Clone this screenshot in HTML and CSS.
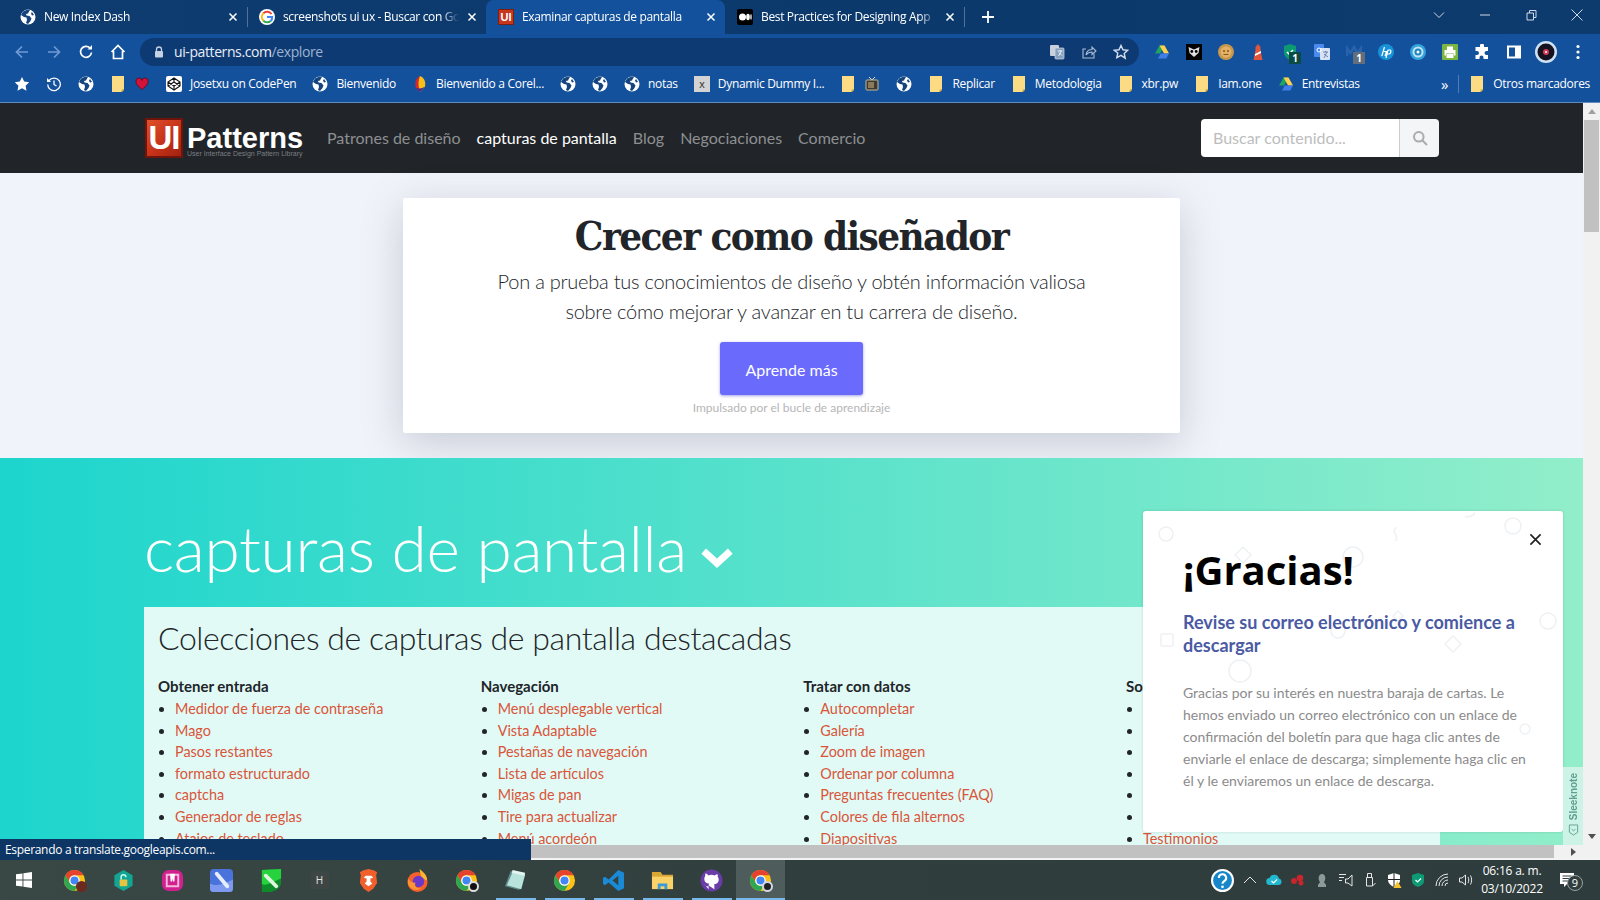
FILE: index.html
```html
<!DOCTYPE html>
<html lang="es">
<head>
<meta charset="utf-8">
<title>Examinar capturas de pantalla</title>
<link rel="stylesheet" href="styles.css">
</head>
<body>
<svg class="sprite" xmlns="http://www.w3.org/2000/svg">
  <symbol id="globe" viewBox="0 0 16 16"><circle cx="8" cy="8" r="7.500" fill="#fff"/><path d="M7 .8 3 2.600 1 6l3 2 2.500.5.5 2.500-1 3 2 1 2.500-3 1-2.500-2-2.500-3-.5-.5-1.500 2-.5 1-2 1-1.500z" fill="#14457f"/><path d="M12 3l2 3-2 .5-1-2z" fill="#14457f"/></symbol>
  <symbol id="folder" viewBox="0 0 16 16"><path d="M2 0h12v13l-3 3H2z" fill="#fbdc85"/><path d="M14 13v1l-2 2h-1l1-3z" fill="#d9b552"/></symbol>
  <symbol id="chrome" viewBox="0 0 24 24"><circle cx="12" cy="12" r="11" fill="#fbc116"/><path d="M12 1A11 11 0 0 0 2.500 6.500l4.500 8A5.500 5.500 0 0 1 12 6.500h9.500A11 11 0 0 0 12 1z" fill="#e5432f"/><path d="M2.500 6.500A11 11 0 0 0 12 23l4.800-8.300a5.500 5.500 0 0 1-9.600 0z" fill="#2fa750"/><circle cx="12" cy="12" r="5.500" fill="#fff"/><circle cx="12" cy="12" r="4.200" fill="#4285f4"/></symbol>
  <symbol id="drive" viewBox="0 0 16 16"><path d="M5.500 1.500h5L6 9.500H1z" fill="#1fa463"/><path d="M5.500 1.500h5l4.500 8h-5z" fill="#ffd04b"/><path d="M4 14.500l2.700-5H15l-2.700 5z" fill="#3f7ee8"/></symbol>
</svg>

<div class="shell">
  <header class="tabstrip">
    <div class="tab">
      <svg class="ic"><use href="#globe"/></svg>
      <span class="tab-title">New Index Dash</span>
      <svg class="tab-x" viewBox="0 0 10 10"><path d="M1.500 1.500l7 7m0-7l-7 7"/></svg>
    </div>
    <div class="tab tab-sep">
      <svg class="ic" viewBox="0 0 16 16"><circle cx="8" cy="8" r="8" fill="#fff"/><path d="M12.500 5A5.200 5.200 0 0 0 4.300 4.400" fill="none" stroke="#ea4335" stroke-width="2"/><path d="M4.300 4.400a5.200 5.200 0 0 0 0 7.200" fill="none" stroke="#fbbc04" stroke-width="2"/><path d="M4.300 11.600a5.200 5.200 0 0 0 7.400 .4" fill="none" stroke="#34a853" stroke-width="2"/><path d="M8 8h5.200a5.200 5.200 0 0 1-1.500 4" fill="none" stroke="#4285f4" stroke-width="2"/></svg>
      <span class="tab-title">screenshots ui ux - Buscar con Google</span>
      <svg class="tab-x" viewBox="0 0 10 10"><path d="M1.500 1.500l7 7m0-7l-7 7"/></svg>
    </div>
    <div class="tab tab-active">
      <span class="ui-fav">UI</span>
      <span class="tab-title">Examinar capturas de pantalla</span>
      <svg class="tab-x" viewBox="0 0 10 10"><path d="M1.500 1.500l7 7m0-7l-7 7"/></svg>
    </div>
    <div class="tab">
      <svg class="ic" viewBox="0 0 16 16"><rect width="16" height="16" rx="2" fill="#000"/><circle cx="5.500" cy="8" r="3.500" fill="#fff"/><ellipse cx="11" cy="8" rx="1.800" ry="3.300" fill="#fff"/><ellipse cx="14" cy="8" rx=".7" ry="3" fill="#fff"/></svg>
      <span class="tab-title">Best Practices for Designing App</span>
      <svg class="tab-x" viewBox="0 0 10 10"><path d="M1.500 1.500l7 7m0-7l-7 7"/></svg>
    </div>
    <span class="strip-sep"></span>
    <svg class="new-tab" viewBox="0 0 14 14"><path d="M7 1v12M1 7h12"/></svg>
    <div class="win-controls">
      <svg class="win" viewBox="0 0 12 12"><path d="M1 3.500l5 5 5-5"/></svg>
      <svg class="win" viewBox="0 0 12 12"><path d="M1 6h10"/></svg>
      <svg class="win" viewBox="0 0 12 12"><path d="M2 4h6.500v7H2zM4.500 4V1.500H11v7H8.500"/></svg>
      <svg class="win" viewBox="0 0 12 12"><path d="M.5.500l11 11m0-11l-11 11"/></svg>
    </div>
  </header>

  <nav class="toolbar">
    <div class="nav-btns">
      <svg class="tool dim" viewBox="0 0 16 16"><path d="M14 8H2.500M8 2.500 2.500 8 8 13.500"/></svg>
      <svg class="tool dim" viewBox="0 0 16 16"><path d="M2 8h11.500M8 2.500 13.500 8 8 13.500"/></svg>
      <svg class="tool" viewBox="0 0 16 16"><path d="M13.500 8.500A5.500 5.500 0 1 1 12 4"/><path class="solid" d="M9.500 5.500H14V1z"/></svg>
      <svg class="tool" viewBox="0 0 16 16"><path d="M1.500 8 8 1.500 14.500 8M3.500 7v7.500h9V7"/></svg>
    </div>
    <div class="omnibox">
      <svg class="lock" viewBox="0 0 12 12"><path d="M3.500 5V3.500a2.500 2.500 0 0 1 5 0V5"/><rect class="solid" x="2" y="5" width="8" height="6.500" rx="1"/></svg>
      <span class="url">ui-patterns.com<span class="url-path">/explore</span></span>
      <div class="omni-actions">
        <svg class="omni-ic" viewBox="0 0 16 16"><rect x="1" y="1" width="9" height="11" rx="1" fill="#c7d0db" stroke="none"/><rect x="6" y="4" width="9" height="11" rx="1" fill="#86a0bf" stroke="#d6dde6" stroke-width=".7"/><path d="M8.500 7h5M11 6v1M9.500 12l3-5M10 8.500l3 3" stroke="#fff" stroke-width=".8"/></svg>
        <svg class="omni-ic" viewBox="0 0 16 16"><path d="M13 9.500V14H2V5h3"/><path d="M5 11c.5-3.500 3-5.500 6-5.500V3l4 4-4 3.500V8c-2.500 0-4.500 1-6 3z"/></svg>
        <svg class="omni-ic star" viewBox="0 0 16 16"><path d="M8 1.500l2 4.300 4.700.5-3.500 3.200 1 4.700L8 11.300l-4.200 2.400 1-4.700L1.300 6.300 6 5.800z"/></svg>
      </div>
    </div>
    <div class="extensions">
      <svg class="ic"><use href="#drive"/></svg>
      <svg class="ic" viewBox="0 0 16 16"><rect width="16" height="16" fill="#000"/><path d="M2.500 3 8 5.500 13.500 3 12.500 9 8 13 3.500 9z" fill="#ddd"/><circle cx="5.800" cy="7.500" r="1.400"/><circle cx="10.200" cy="7.500" r="1.400"/></svg>
      <svg class="ic" viewBox="0 0 16 16"><circle cx="8" cy="8" r="8" fill="#c9974a"/><circle cx="8" cy="8" r="5.500" fill="#e3b064"/><circle cx="6" cy="7" r="1" fill="#7b5a25"/><circle cx="10" cy="7" r="1" fill="#7b5a25"/><path d="M5.500 10.500h5" stroke="#7b5a25"/></svg>
      <svg class="ic" viewBox="0 0 16 16"><path d="M8 0l2.500 3v3L12.500 16h-9L5.500 6V3z" fill="#e0563b"/><path d="M5 10 11 7v2l-6 3z" fill="#fff"/></svg>
      <span class="ext-badged">
        <svg class="ic" viewBox="0 0 16 16"><path d="M8 0l6 2v6c0 4-3 6.500-6 8-3-1.500-6-4-6-8V2z" fill="#0b9a71"/><path d="M5 8l2 2 4-4" fill="none" stroke="#fff" stroke-width="1.500"/></svg>
        <span class="badge badge-green">1</span>
      </span>
      <svg class="ic" viewBox="0 0 16 16"><rect width="10" height="13" rx="1" fill="#4a8af0"/><rect x="6" y="4" width="10" height="12" rx="1" fill="#d5e2f7"/><circle cx="5" cy="6" r="2" fill="none" stroke="#fff"/><path d="M9 8h5M11.500 7v1M10 14l3-6M10 10l4 3" stroke="#5a6f8f" stroke-width=".8"/></svg>
      <span class="ext-badged">
        <svg class="ic" viewBox="0 0 16 16"><path d="M1 12V4l3.500 5L8 3l3.500 6L15 4v8" fill="none" stroke="#2a62ab" stroke-width="2.500"/></svg>
        <span class="badge badge-gray">1</span>
      </span>
      <svg class="ic" viewBox="0 0 16 16"><circle cx="8" cy="8" r="8" fill="#1792d8"/><path d="M6.500 3 3.800 12M6 7.500h2.500L7 12M10 6 8 14M10 6h2c1 0 1 1 .7 2.500-.3 1-1 1.500-2 1.500H9" fill="none" stroke="#fff" stroke-width="1.200"/></svg>
      <svg class="ic" viewBox="0 0 16 16"><circle cx="8" cy="8" r="8" fill="#33a3dc"/><circle cx="8" cy="8" r="5.500" fill="#bfe4f5"/><circle cx="8" cy="8" r="3.500" fill="#1f86bd"/><circle cx="8" cy="8" r="1.500" fill="#fff"/></svg>
      <svg class="ic" viewBox="0 0 16 16"><rect width="16" height="16" rx="1" fill="#7cb542"/><path d="M5 2.500h6V6H5zM2.500 6h11v5.500H12V9.500H4v2H2.500zM4.500 10h7v4h-7z" fill="#fff"/></svg>
      <svg class="ic" viewBox="0 0 16 16"><path d="M6 1.500a2 2 0 0 1 4 0V3h4v4h-1.500a2 2 0 0 0 0 4H14v4H9.500v-1.500a2 2 0 0 0-4 0V15H1.500v-4H3a2 2 0 0 0 0-4H1.500V3H6z" fill="#fff"/></svg>
      <svg class="ic" viewBox="0 0 16 16"><path d="M1 1.500h14v13H1z" fill="#fff"/><path d="M3 3.500h6v9H3z" fill="#14519c"/></svg>
      <svg class="avatar" viewBox="0 0 22 22"><circle cx="11" cy="11" r="11" fill="#cfe2f5"/><circle cx="11" cy="11" r="8.500" fill="#161320"/><circle cx="11" cy="11" r="3" fill="#d63a55"/><circle cx="11" cy="11" r="1" fill="#fff"/></svg>
      <svg class="ic" viewBox="0 0 16 16"><circle cx="8" cy="2.500" r="1.600" fill="#fff"/><circle cx="8" cy="8" r="1.600" fill="#fff"/><circle cx="8" cy="13.500" r="1.600" fill="#fff"/></svg>
    </div>
  </nav>

  <div class="bookmarks">
    <svg class="ic" viewBox="0 0 16 16"><path d="M8 1l2.200 4.500 5 .7-3.600 3.500.9 5L8 12.300l-4.500 2.400.9-5L.8 6.200l5-.7z" fill="#fff"/></svg>
    <svg class="ic hist" viewBox="0 0 16 16"><path d="M3 4.500A6.300 6.300 0 1 1 1.700 8.500M8 4.500V8.500l2.500 1.500"/><path class="solid" d="M1 2v4h4z"/></svg>
    <svg class="ic"><use href="#globe"/></svg>
    <svg class="ic"><use href="#folder"/></svg>
    <svg class="ic heart" viewBox="-2 -2 20 20"><path d="M8 15C3 11 .5 8 .5 5A3.800 3.800 0 0 1 8 3.500 3.800 3.800 0 0 1 15.500 5c0 3-2.500 6-7.500 10z" fill="#d4123a" stroke="#5a0a18"/></svg>
    <a class="bm"><svg class="ic" viewBox="0 0 16 16"><rect width="16" height="16" rx="2" fill="#fff"/><path d="M8 2l6 4v4l-6 4-6-4V6zM2 6l6 4 6-4M2 10l6-4 6 4M8 2v4M8 10v4" fill="none" stroke="#111" stroke-width="1.100"/></svg>Josetxu on CodePen</a>
    <a class="bm"><svg class="ic"><use href="#globe"/></svg>Bienvenido</a>
    <a class="bm"><svg class="ic" viewBox="0 0 16 16"><path d="M8 0C3.500 2 2.500 8 4 12l4 4z" fill="#d7272c"/><path d="M8 0c4 1.500 6 5.500 5 10.500L8 16C6 10 6 5 8 0z" fill="#f6c21a"/><path d="M4 12l4 4 5-5.500c-2.500 2-5.500 2.500-9 1.500z" fill="#4c2a86"/></svg>Bienvenido a Corel...</a>
    <svg class="ic"><use href="#globe"/></svg>
    <svg class="ic"><use href="#globe"/></svg>
    <a class="bm"><svg class="ic"><use href="#globe"/></svg>notas</a>
    <a class="bm"><span class="x-fav">x</span>Dynamic Dummy I...</a>
    <svg class="ic"><use href="#folder"/></svg>
    <svg class="ic tv" viewBox="0 0 16 16"><path d="M5 1l3 3 3-3" fill="none" stroke="#ddd"/><rect x="2" y="4" width="12" height="10" rx="1" fill="#3a3a3a" stroke="#c8b98a"/><rect x="4" y="6" width="6" height="6" fill="#8b7a55"/></svg>
    <svg class="ic"><use href="#globe"/></svg>
    <a class="bm"><svg class="ic"><use href="#folder"/></svg>Replicar</a>
    <a class="bm"><svg class="ic"><use href="#folder"/></svg>Metodologia</a>
    <a class="bm"><svg class="ic"><use href="#folder"/></svg>xbr.pw</a>
    <a class="bm"><svg class="ic"><use href="#folder"/></svg>Iam.one</a>
    <a class="bm"><svg class="ic"><use href="#drive"/></svg>Entrevistas</a>
    <div class="bm-end">
      <span class="more">»</span>
      <span class="bm-sep"></span>
      <a class="bm"><svg class="ic"><use href="#folder"/></svg>Otros marcadores</a>
    </div>
  </div>

  <div class="viewport">
    <main class="page">
      <div class="site-nav">
        <div class="logo">
          <span class="logo-mark">UI</span>
          <span class="logo-word"><b>Patterns</b><small>User Interface Design Pattern Library</small></span>
        </div>
        <a class="nav-link">Patrones de diseño</a>
        <a class="nav-link nav-on">capturas de pantalla</a>
        <a class="nav-link">Blog</a>
        <a class="nav-link">Negociaciones</a>
        <a class="nav-link">Comercio</a>
        <div class="search">
          <span class="search-input">Buscar contenido...</span>
          <span class="search-btn"><svg viewBox="0 0 16 16"><circle cx="6.800" cy="6.800" r="4.800"/><path d="M10.500 10.500 15 15"/></svg></span>
        </div>
      </div>

      <section class="hero">
        <div class="hero-card">
          <h1>Crecer como diseñador</h1>
          <p>Pon a prueba tus conocimientos de diseño y obtén información valiosa<br>sobre cómo mejorar y avanzar en tu carrera de diseño.</p>
          <a class="cta">Aprende más</a>
          <small>Impulsado por el bucle de aprendizaje</small>
        </div>
      </section>

      <section class="shots">
        <h2 class="shots-title">capturas de pantalla
          <svg class="chev" viewBox="0 0 32 22"><path d="M3.500 5.500 16 17 28.500 5.500"/></svg>
        </h2>
        <div class="panel">
          <h3>Colecciones de capturas de pantalla destacadas</h3>
          <div class="cols">
            <div>
              <h4>Obtener entrada</h4>
              <ul>
                <li>Medidor de fuerza de contraseña</li><li>Mago</li><li>Pasos restantes</li><li>formato estructurado</li><li>captcha</li><li>Generador de reglas</li><li>Atajos de teclado</li>
              </ul>
            </div>
            <div>
              <h4>Navegación</h4>
              <ul>
                <li>Menú desplegable vertical</li><li>Vista Adaptable</li><li>Pestañas de navegación</li><li>Lista de artículos</li><li>Migas de pan</li><li>Tire para actualizar</li><li>Menú acordeón</li>
              </ul>
            </div>
            <div>
              <h4>Tratar con datos</h4>
              <ul>
                <li>Autocompletar</li><li>Galería</li><li>Zoom de imagen</li><li>Ordenar por columna</li><li>Preguntas frecuentes (FAQ)</li><li>Colores de fila alternos</li><li>Diapositivas</li>
              </ul>
            </div>
            <div>
              <h4>Social</h4>
              <ul>
                <li>Logros</li><li>Invitaciones</li><li>Compartir</li><li>Comentarios</li><li>Reputación</li><li>Amigos</li><li>Testimonios</li>
              </ul>
            </div>
          </div>
        </div>
      </section>

      <aside class="popup">
        <svg class="confetti" viewBox="0 0 420 321">
          <circle cx="23" cy="23" r="7"/><path d="M100 36l8 8-8 8-8-8z"/><circle cx="210" cy="46" r="10"/><path d="M252 30c6-6-6-8 2-14"/><path d="M322 6c4-2 6 2 10-4"/><circle cx="370" cy="15" r="8"/><path d="M310 125l8 8-8 8-8-8z"/><circle cx="405" cy="110" r="8"/><rect x="18" y="123" width="12" height="12" rx="1"/><circle cx="97" cy="160" r="11"/><circle cx="382" cy="218" r="5"/><circle cx="195" cy="120" r="7"/><path d="M255 100l5 5-5 5-5-5z"/>
        </svg>
        <svg class="popup-x" viewBox="0 0 14 14"><path d="M1.500 1.500l11 11m0-11l-11 11"/></svg>
        <h2>¡Gracias!</h2>
        <h3>Revise su correo electrónico y comience a descargar</h3>
        <p>Gracias por su interés en nuestra baraja de cartas. Le hemos enviado un correo electrónico con un enlace de confirmación del boletín para que haga clic antes de enviarle el enlace de descarga; simplemente haga clic en él y le enviaremos un enlace de descarga.</p>
      </aside>
      <div class="sleeknote"><span>Sleeknote</span><svg viewBox="0 0 12 14"><path d="M1.500 1.500h9v8L6 12.500 1.500 9.500z"/><path d="M4 6l2 2 2-2"/></svg></div>
    </main>
    <div class="vscroll">
      <span class="arrow-up"></span>
      <span class="vthumb"></span>
      <span class="arrow-down"></span>
    </div>
  </div>

  <div class="hscroll"><span class="hthumb"></span><span class="arrow-right"></span></div>
  <div class="gap-line"></div>

  <div class="status">Esperando a translate.googleapis.com...</div>

  <footer class="taskbar">
    <svg class="start" viewBox="0 0 16 16"><path d="M0 2.300 6.500 1.400V7.500H0zM7.400 1.300 16 0V7.500H7.400zM0 8.500H6.500V14.600L0 13.700zM7.400 8.500H16V16L7.400 14.700z" fill="#fff"/></svg>
    <span class="task"><svg viewBox="0 0 24 24"><use href="#chrome"/></svg><i class="sub sub-gift"></i></span>
    <span class="task"><svg viewBox="0 0 24 24"><path d="M12 1l9.500 5.500v11L12 23l-9.500-5.500v-11z" fill="#12a594"/><rect x="8" y="11" width="8" height="7" rx="1" fill="#e8c33f"/><path d="M9.500 11V8.500a2.500 2.500 0 0 1 5 0" fill="none" stroke="#cfe" stroke-width="1.500"/></svg></span>
    <span class="task"><svg viewBox="0 0 24 24"><rect x="1" y="1" width="22" height="22" rx="7" fill="#d0218e"/><path d="M6 6h12v12H6z" fill="none" stroke="#f6b9dc" stroke-width="2"/><path d="M9.500 5h5l-.5 8h-1.500L12 10l-.5 3H10z" fill="#fff"/></svg></span>
    <span class="task"><svg viewBox="0 0 24 24"><rect x="0" y="0" width="24" height="24" rx="4" fill="#4a72dd"/><path d="M0 15c8 4 16 0 24-4v9a4 4 0 0 1-4 4H4a4 4 0 0 1-4-4z" fill="#7d9af0"/><path d="M7 5l11 13" stroke="#e6eefc" stroke-width="4" stroke-linecap="round"/></svg></span>
    <span class="task"><svg viewBox="0 0 24 24"><path d="M3 1l20-1v14c0 5-5 9-11 10H3z" fill="#0e8c2a"/><path d="M3 1l20-1v10C15 13 9 18 3 16z" fill="#26d23e"/><path d="M7 7l11 11" stroke="#dff5e0" stroke-width="4" stroke-linecap="round"/></svg></span>
    <span class="task"><span class="h-tile">H</span></span>
    <span class="task"><svg viewBox="0 0 24 24"><path d="M12 0l6 1.500 3 2-1 3 1 8-4 6-5 3.500-5-3.500-4-6 1-8-1-3 3-2z" fill="#f1602b"/><path d="M7 9l3 1v3l-2 2 4 3 4-3-2-2v-3l3-1-2-2H9z" fill="#fff"/></svg></span>
    <span class="task"><svg viewBox="0 0 24 24"><circle cx="12" cy="13.500" r="10.500" fill="#f5602c"/><path d="M14 0c4 3 8 6 8 12l-6-3z" fill="#ffb52e"/><circle cx="13" cy="13" r="6" fill="#6b38c8"/><path d="M2 10c2 3 5 5 8 4-2 4 2 7 6 6-5 4-13 1-14-6z" fill="#ff9530"/></svg></span>
    <span class="task"><svg viewBox="0 0 24 24"><use href="#chrome"/></svg><i class="sub sub-dark"></i></span>
    <span class="task task-open"><svg viewBox="0 0 24 24"><path d="M7 2l13 3-4 17L1 18z" fill="#5f8d8b"/><path d="M9 3l13 3-4 15-15-4z" fill="#b9e3dd"/><path d="M9 1l13 3-.5 3L8 4z" fill="#e3f4f1"/></svg></span>
    <span class="task task-open"><svg viewBox="0 0 24 24"><use href="#chrome"/></svg></span>
    <span class="task task-open"><svg viewBox="0 0 24 24"><path d="M17 1l6 3v16l-6 3-10-9-4 3-2-1.500V9.500L3 8l4 3zM17 7l-6 5 6 5z" fill="#1b8ad6"/></svg></span>
    <span class="task task-open"><svg viewBox="0 0 24 24"><path d="M1 3h9l2 3h11v3H1z" fill="#d9a834"/><path d="M1 8h22v13H1z" fill="#fbd268"/><path d="M7 15h10v6h-3v-3h-4v3H7z" fill="#3b9ad8"/></svg></span>
    <span class="task task-open"><svg viewBox="0 0 24 24"><circle cx="12" cy="12" r="11.500" fill="#6a3ca8"/><path d="M9 21v-3c-3 .6-4-1-4.500-2M15 21v-3c0-1 0-1.500-.5-2 3-.3 5-1.500 5-5 0-1-.3-2-1-2.800.2-1 .1-2-.2-2.700-1 0-2 .5-3 1.200a10 10 0 0 0-6.600 0C7.700 5.200 6.700 4.700 5.700 4.700c-.3.7-.4 1.700-.2 2.700-.7.800-1 1.800-1 2.800 0 3.500 2 4.700 5 5-.4.400-.5 1-.5 2" fill="#fff"/></svg></span>
    <span class="task task-active"><svg viewBox="0 0 24 24"><use href="#chrome"/></svg><i class="sub sub-disc"></i></span>
    <div class="tray">
      <svg class="help" viewBox="0 0 22 22"><circle cx="11" cy="11" r="10" fill="#1685c9" stroke="#fff" stroke-width="2"/><path d="M7.500 8.500a3.500 3.500 0 1 1 5 3.200c-1 .6-1.500 1-1.500 2.300" fill="none" stroke="#fff" stroke-width="2"/><circle cx="11" cy="17" r="1.300" fill="#fff"/></svg>
      <svg class="tr" viewBox="0 0 16 16"><path class="line" d="M2 11l6-6 6 6"/></svg>
      <svg class="tr" viewBox="0 0 16 16"><path d="M4 13a3.500 3.500 0 0 1-.5-7A5 5 0 0 1 13 6.500 3.300 3.300 0 0 1 12.500 13z" fill="#22b8cf"/><path d="M5.500 9l2 2 3.500-3.500" fill="none" stroke="#fff" stroke-width="1.200"/></svg>
      <svg class="tr" viewBox="0 0 16 16"><g fill="#c8252c"><circle cx="4" cy="9" r="3"/><circle cx="10" cy="6" r="3.300"/><circle cx="11" cy="11" r="2.500"/></g></svg>
      <svg class="tr" viewBox="0 0 16 16"><path d="M4 15v-2c0-1 2-2 2-3-2-2-2-8 2-8s4 6 2 8c0 1 2 2 2 3v2z" fill="#8e9a98"/></svg>
      <svg class="tr" viewBox="0 0 16 16"><path class="line" d="M1 2.500h7M1 5.500h5M1 8.500h3M14 3v11l-4-3H7.500V7H10z"/></svg>
      <svg class="tr" viewBox="0 0 16 16"><path class="line" d="M4.500 5.500h6V14h-6zM5.500 5.500V1.500h4v4M10.500 14l3-3"/></svg>
      <svg class="tr" viewBox="0 0 16 16"><path d="M8 1l6 2v5c0 3-2.500 5.500-6 7-3.500-1.500-6-4-6-7V3z" fill="#fff"/><path d="M8 1v14M2 7.500h12" stroke="#222"/><path d="M11.500 9l4 7h-8z" fill="#f3c12c"/></svg>
      <svg class="tr" viewBox="0 0 16 16"><path d="M8 1l6 2v6c0 3-3 5-6 6-3-1-6-3-6-6V3z" fill="#0d9b75"/><path d="M5.500 8l2 2 3.500-3.500" fill="none" stroke="#fff" stroke-width="1.200"/></svg>
      <svg class="tr" viewBox="0 0 16 16"><path class="line" d="M2 14A12 12 0 0 1 14 2M5 14a9 9 0 0 1 9-9M8 14a6 6 0 0 1 6-6M11 14a3 3 0 0 1 3-3"/></svg>
      <svg class="tr" viewBox="0 0 16 16"><path class="line" d="M1.500 6v4H4l3.500 3V3L4 6zM10 5c1 2 1 4 0 6M12.500 3.500c1.500 3 1.500 6 0 9"/></svg>
      <div class="clock"><span>06:16 a. m.</span><span>03/10/2022</span></div>
      <div class="notif">
        <svg viewBox="0 0 16 16"><path d="M1 1h14v11H8l-3 3v-3H1z" fill="#fff"/><path d="M3.500 4h9M3.500 6.500h9M3.500 9h6" stroke="#2f3d3d"/></svg>
        <span class="notif-count">9</span>
      </div>
    </div>
  </footer>
</div>
</body>
</html>
```

FILE: styles.css
```css
* { box-sizing: border-box; }
html, body { margin: 0; height: 100%; overflow: hidden; }
body { font-family: "Lato", "Open Sans", sans-serif; background: #fff; }
.sprite { position: absolute; width: 0; height: 0; }
a { color: inherit; text-decoration: none; }
.shell { position: relative; width: 1600px; height: 900px; display: flex; flex-direction: column; overflow: hidden; }
.ic { width: 16px; height: 16px; flex: none; display: block; }

/* tab strip */
.tabstrip { height: 34px; flex: none; display: flex; align-items: stretch; padding-left: 8px; background: linear-gradient(90deg, #0f3c70, #0c396c 60%, #0e3b6d); color: #fff; font: 12px "Open Sans", sans-serif; }
.tab { position: relative; width: 239px; display: flex; align-items: center; gap: 8px; padding: 0 9px 0 12px; }
.tab-sep::before { content: ""; position: absolute; left: 0; top: 7px; bottom: 7px; width: 1px; background: #51719a; }
.tab-active { background: #14519c; border-radius: 8px 8px 0 0; }
.tab-title { flex: 1; white-space: nowrap; overflow: hidden; letter-spacing: -.35px; padding-bottom: 2px; -webkit-mask-image: linear-gradient(90deg, #000 90%, transparent); mask-image: linear-gradient(90deg, #000 90%, transparent); }
.tab-x { width: 10px; height: 10px; flex: none; fill: none; stroke: #fff; stroke-width: 1.500; }
.ui-fav { width: 16px; height: 16px; flex: none; background: #c8361e; border: 1px solid #7d1f10; color: #fff; font: bold 11px/14px "Liberation Sans", sans-serif; text-align: center; }
.strip-sep { width: 1px; margin: 7px 0; background: #51719a; }
.new-tab { width: 14px; height: 14px; margin: 10px 0 0 16px; fill: none; stroke: #fff; stroke-width: 1.800; }
.win-controls { margin-left: auto; padding-top: 9px; display: flex; gap: 34px; padding-right: 17px; }
.win { width: 12px; height: 12px; fill: none; stroke: #cfd9e6; stroke-width: 1; }

/* toolbar */
.toolbar { height: 35px; flex: none; display: flex; align-items: center; background: #14519c; }
.nav-btns { display: flex; gap: 16px; padding-left: 14px; width: 140px; }
.tool { width: 16px; height: 16px; fill: none; stroke: #fff; stroke-width: 1.700; }
.tool.dim { stroke: #6f9bd2; }
.solid { fill: #fff; stroke: none; }
.omnibox { width: 999px; height: 28px; display: flex; align-items: center; background: #0e3a73; border-radius: 14px; padding-left: 13px; color: #e8eef7; font: 14px "Open Sans", sans-serif; letter-spacing: -.4px; }
.lock { width: 12px; height: 12px; fill: none; stroke: #c5d2e3; stroke-width: 1.300; margin-right: 9px; }
.lock .solid { fill: #c5d2e3; }
.url-path { color: #9db3cf; }
.omni-actions { margin-left: auto; display: flex; gap: 16px; padding-right: 10px; }
.omni-ic { width: 16px; height: 16px; fill: none; stroke: #a9bad1; stroke-width: 1.100; }
.omni-ic.star { stroke: #d5dfec; stroke-width: 1.400; }
.extensions { display: flex; align-items: center; gap: 16px; padding-left: 15px; }
.avatar { width: 22px; height: 22px; margin: 0 -3px; }
.ext-badged { position: relative; display: block; width: 16px; height: 16px; }
.badge { position: absolute; left: 7px; top: 8px; width: 12px; height: 12px; color: #fff; font: bold 10px/12px "Open Sans", sans-serif; text-align: center; }
.badge-green { background: #0c4a45; }
.badge-gray { background: #626e7c; }

/* bookmarks */
.bookmarks { height: 34px; flex: none; display: flex; align-items: center; gap: 16px; padding: 0 10px 4px 14px; background: #14519c; border-bottom: 1px solid #5f8abd; color: #fff; font: 12px "Open Sans", sans-serif; letter-spacing: -.3px; white-space: nowrap; }
.heart, .tv { margin-left: -8px; }
.bm { display: flex; align-items: center; gap: 8px; }
.hist { fill: none; stroke: #fff; stroke-width: 1.300; }
.x-fav { width: 16px; height: 16px; background: #d3d3d3; color: #333; font: 11px/16px "Liberation Sans", sans-serif; text-align: center; }
.bm-end { margin-left: auto; display: flex; align-items: center; gap: 10px; }
.more { font-size: 15px; line-height: 16px; }
.bm-sep { width: 1px; height: 18px; background: #4f7cb2; }

/* page */
.viewport { height: 742px; flex: none; display: flex; }
.page { position: relative; width: 1583px; flex: none; overflow: hidden; background: #f1f3fa; }
.site-nav { height: 70px; display: flex; align-items: center; gap: 16px; padding-left: 145px; background: #212529; }
.logo { display: flex; align-items: center; gap: 4px; margin-right: 8px; width: 158px; }
.logo-mark { width: 38px; height: 40px; flex: none; background: linear-gradient(135deg, #e0502a, #c33017 60%, #a02210); border: 2px solid #6e140a; color: #fff; font: bold 33px/35px "Liberation Sans", sans-serif; text-align: center; letter-spacing: -1px; }
.logo-word { display: flex; flex-direction: column; padding-top: 8px; color: #fff; }
.logo-word b { font: bold 29px/24px "Liberation Sans", sans-serif; }
.logo-word small { font: 7px/8px "Liberation Sans", sans-serif; color: #7b7f83; white-space: nowrap; letter-spacing: 0; }
.nav-link { font-size: 16px; color: #8d8f91; padding-bottom: 2px; }
.nav-on { color: #fff; }
.search { margin-left: auto; margin-right: 144px; display: flex; height: 38px; }
.search-input { width: 198px; background: #fff; border-radius: 4px 0 0 4px; padding: 0 12px; color: #bdbdbd; font-size: 16px; line-height: 38px; }
.search-btn { width: 40px; background: #f4f5f6; border-left: 1px solid #ccc; border-radius: 0 4px 4px 0; display: flex; align-items: center; justify-content: center; }
.search-btn svg { width: 16px; height: 16px; fill: none; stroke: #a8acb0; stroke-width: 2; }

.hero { height: 285px; padding: 25px 403px; }
.hero-card { width: 777px; height: 235px; background: #fff; border-radius: 2px; box-shadow: 0 10px 40px rgba(90, 100, 120, .28); display: flex; flex-direction: column; align-items: center; color: #212529; }
.hero-card h1 { margin: 14px 0 0; font: bold 40px/48px "DejaVu Serif Condensed", "DejaVu Serif", serif; letter-spacing: -1.600px; }
.hero-card p { margin: 6px 0 0; font-size: 20px; line-height: 30px; font-weight: 300; text-align: center; letter-spacing: -.25px; }
.cta { margin-top: 16px; width: 143px; height: 53px; background: #6a6afc; border-radius: 3px; box-shadow: 0 1px 3px rgba(70, 70, 200, .5); color: #fff; font-size: 16px; line-height: 55px; text-align: center; }
.hero-card small { margin-top: 5px; font-size: 12px; line-height: 16px; color: #b6b6b6; }

.shots { height: 387px; background: linear-gradient(90deg, #1dd5cd, #92eeca); padding: 0 143px 0 144px; }
.shots-title { margin: 0; height: 149px; padding-top: 45px; font-size: 64px; line-height: 90px; font-weight: 300; color: #fff; white-space: nowrap; letter-spacing: -.35px; }
.chev { width: 34px; height: 24px; margin-left: -4px; vertical-align: 3px; fill: none; stroke: #fff; stroke-width: 6.500; }
.panel { height: 238px; background: #e1faf5; padding: 9px 14px 0; overflow: hidden; }
.panel h3 { margin: 0; font-size: 32px; line-height: 44px; font-weight: 300; color: #212529; white-space: nowrap; letter-spacing: -.42px; }
.cols { display: grid; grid-template-columns: repeat(4, 322.67px); margin-top: 15px; }
.cols h4 { margin: 0; font-size: 15px; line-height: 22px; font-weight: 700; color: #212529; white-space: nowrap; }
.cols ul { margin: 1px 0 0; padding-left: 17px; }
.cols li { font-size: 14.400px; line-height: 21.600px; color: #d9553a; }
.cols li::marker { color: #212529; }

.popup { position: absolute; left: 1143px; top: 408px; width: 420px; height: 321px; padding: 40px 40px 0; background: #fff; border-radius: 3px; box-shadow: 0 0 3px rgba(0, 0, 0, .15); }
.confetti { position: absolute; left: 0; top: 0; width: 420px; height: 321px; fill: none; stroke: #eef1f3; stroke-width: 1.500; }
.popup-x { position: absolute; left: 386px; top: 22px; width: 13px; height: 13px; fill: none; stroke: #222; stroke-width: 1.800; }
.popup h2 { position: relative; margin: 0; font: bold 40px/38px "Open Sans", sans-serif; color: #000; }
.popup h3 { position: relative; margin: 22px 0 0; font-size: 18px; line-height: 23px; font-weight: 700; color: #4a5aa3; }
.popup p { position: relative; margin: 25px -6px 0 0; font-size: 14px; line-height: 22px; color: #8b8b8b; }
.sleeknote { position: absolute; left: 1563px; top: 664px; width: 20px; height: 78px; background: #cdf3e6; display: flex; flex-direction: column; align-items: center; justify-content: flex-end; gap: 3px; padding-bottom: 8px; color: #5e9f8f; }
.sleeknote span { writing-mode: vertical-rl; transform: rotate(180deg); font: bold 10px "Liberation Sans", sans-serif; }
.sleeknote svg { width: 11px; height: 14px; fill: none; stroke: #5e9f8f; }

.vscroll { width: 17px; flex: none; display: flex; flex-direction: column; align-items: center; background: #f1f1f1; position: relative; }
.arrow-up { margin-top: 6px; border: 4px solid transparent; border-top: 0; border-bottom: 5px solid #a0a0a0; }
.vthumb { margin-top: 6px; width: 15px; height: 112px; background: #c1c1c1; }
.arrow-down { margin-top: auto; margin-bottom: 6px; border: 4px solid transparent; border-bottom: 0; border-top: 5px solid #505050; }
.hscroll { height: 13px; flex: none; display: flex; align-items: center; background: #f1f1f1; }
.hthumb { width: 1554px; height: 13px; background: #c1c1c1; }
.arrow-right { margin-left: 17px; border: 4px solid transparent; border-right: 0; border-left: 5px solid #505050; }
.gap-line { height: 2px; flex: none; background: #f3f3f3; }
.status { position: absolute; left: 0; top: 839px; width: 531px; height: 21px; padding-left: 5px; background: #0d3664; color: #fff; font: 12px/21px "Open Sans", sans-serif; letter-spacing: -.32px; }

/* taskbar */
.taskbar { height: 40px; flex: none; display: flex; align-items: stretch; background: linear-gradient(90deg, #3a4845, #303e3d 50%, #2f3c3d); }
.start { width: 16px; height: 16px; margin: 12px 18px 0 16px; }
.task { position: relative; width: 49px; flex: none; display: flex; align-items: center; justify-content: center; }
.task svg { width: 23px; height: 23px; }
.task-open::after, .task-active::after { content: ""; position: absolute; left: 5px; right: 4px; bottom: 0; height: 2px; background: #76b9ed; }
.task-active { background: #4f5c5c; }
.task-active::after { left: 0; right: 0; }
.h-tile { width: 18px; height: 18px; background: #3d4644; color: #e6e6e6; font: 10px/18px "Open Sans", sans-serif; text-align: center; }
.sub { position: absolute; left: 26px; top: 21px; width: 11px; height: 11px; border-radius: 50%; }
.sub-gift { background: #6a2a20; }
.sub-dark { background: #111; border: 2px solid #ddd; }
.sub-disc { background: #222; border: 2px solid #cdd7e6; }
.tray { margin-left: auto; display: flex; align-items: center; color: #fff; }
.help { width: 23px; height: 23px; margin-right: 8px; }
.tr { width: 16px; height: 16px; margin-right: 8px; }
.tr .line { fill: none; stroke: #e6e6e6; stroke-width: 1; }
.clock { margin-left: -8px; width: 76px; display: flex; flex-direction: column; align-items: center; font: 12px/18px "Open Sans", sans-serif; letter-spacing: -.2px; }
.notif { position: relative; width: 16px; height: 16px; margin: 0 25px 0 9px; }
.notif svg { width: 16px; height: 16px; display: block; }
.notif-count { position: absolute; left: 0; top: 3px; width: 16px; height: 16px; border: 1px solid #9aa3a3; border-radius: 50%; background: #2f3d3d; transform: translate(8px, 0); font: 11px/14px "Open Sans", sans-serif; text-align: center; }
```
